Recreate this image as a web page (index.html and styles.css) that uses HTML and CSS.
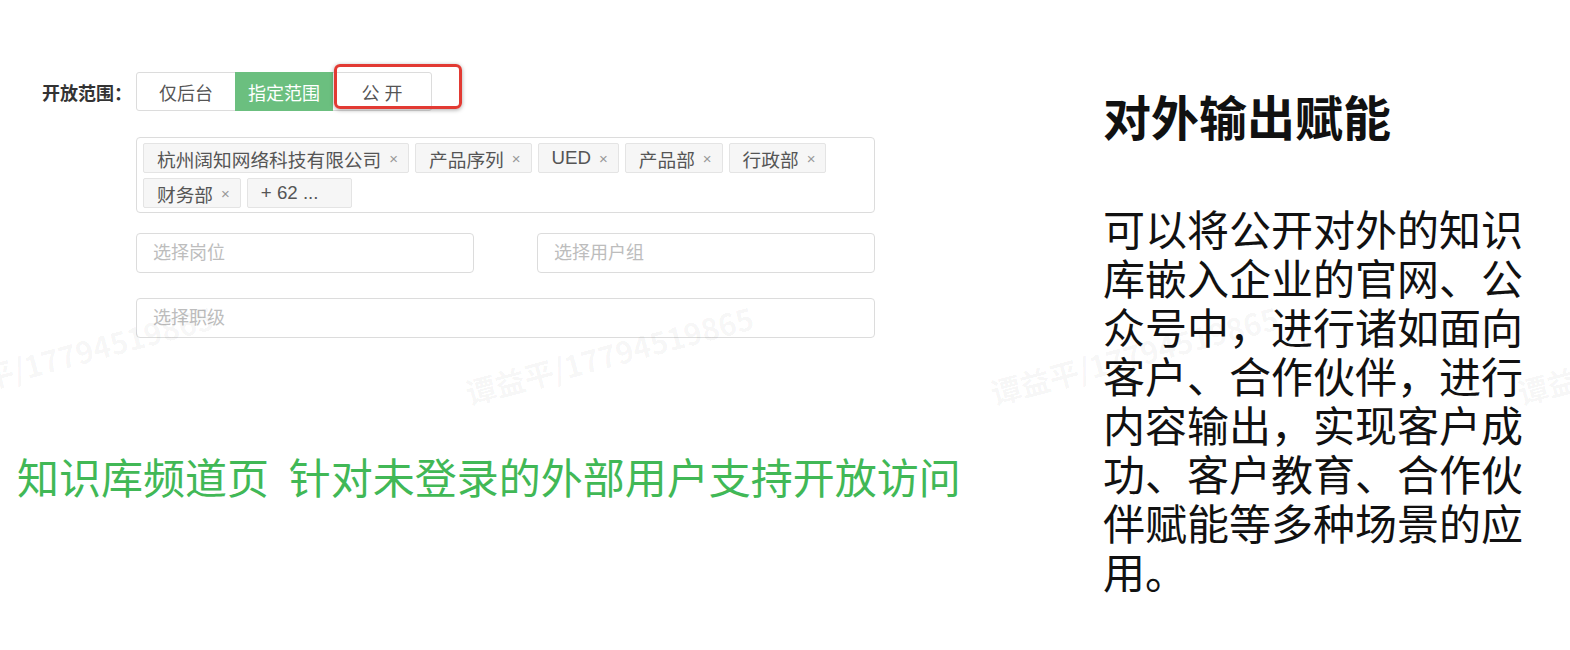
FILE: index.html
```html
<!DOCTYPE html>
<html lang="zh-CN">
<head>
    <meta charset="UTF-8">
    <title>开放范围</title>
    <link rel="stylesheet" href="styles.css">
</head>
<body>
    <div class="page">
        <div class="left">
            <div class="form">
                <div class="form-row">
                    <div class="form-label">开放范围：</div>
                    <div class="seg">
                        <span class="seg-item">仅后台</span>
                        <span class="seg-item active">指定范围</span>
                        <span class="seg-item">公 开</span>
                        <span class="mark"></span>
                    </div>
                </div>
                <div class="form-row indent tags-row">
                    <div class="tag-box">
                        <span class="tag">杭州阔知网络科技有限公司<i class="tag-x">×</i></span>
                        <span class="tag">产品序列<i class="tag-x">×</i></span>
                        <span class="tag">UED<i class="tag-x">×</i></span>
                        <span class="tag">产品部<i class="tag-x">×</i></span>
                        <span class="tag">行政部<i class="tag-x">×</i></span>
                        <span class="tag">财务部<i class="tag-x">×</i></span>
                        <span class="tag more">+ 62 ...</span>
                    </div>
                </div>
                <div class="form-row indent inputs-row">
                    <input class="field half" type="text" placeholder="选择岗位">
                    <input class="field half" type="text" placeholder="选择用户组">
                </div>
                <div class="form-row indent level-row">
                    <input class="field full" type="text" placeholder="选择职级">
                </div>
            </div>
            <p class="note">知识库频道页 针对未登录的外部用户支持开放访问</p>
        </div>
        <div class="right">
            <h1 class="title">对外输出赋能</h1>
            <p class="desc">可以将公开对外的知识库嵌入企业的官网、公众号中，进行诸如面向客户、合作伙伴，进行内容输出，实现客户成功、客户教育、合作伙伴赋能等多种场景的应用。</p>
        </div>

        <!-- watermark layer -->
        <div class="watermarks">
            <span class="wm" style="left:-80px;top:332px">谭益平/17794519865</span>
            <span class="wm" style="left:460px;top:332px">谭益平/17794519865</span>
            <span class="wm" style="left:985px;top:332px">谭益平/17794519865</span>
            <span class="wm" style="left:1512px;top:332px">谭益平/17794519865</span>
        </div>
    </div>
</body>
</html>
```

FILE: styles.css
```css
html, body {margin: 0; padding: 0; background: #ffffff;}
body {font: 18px "Liberation Sans", "Noto Sans CJK SC", sans-serif; color: #333;}

.page {
    position: relative;
    display: flex;
    width: 1570px;
    height: 650px;
    overflow: hidden;
}

/* left side: the form screenshot */
.left {
    box-sizing: border-box;
    width: 1103px;
    padding-left: 17px;
    padding-top: 72px;
}
.form {margin-left: 25px;}
.form-row {display: flex; align-items: center;}
.form-row.indent {padding-left: 94px;}
.form-label {
    width: 94px;
    font-weight: bold;
    color: #333;
    font-size: 18px;
}

.seg {
    position: relative;
    display: flex;
    width: 296px;
    height: 39px;
    box-sizing: border-box;
    border: 1px solid #dcdcdc;
    border-radius: 3px;
}
.seg-item {
    flex: 1 1 0;
    display: flex;
    align-items: center;
    justify-content: center;
    color: #555;
}
.seg-item + .seg-item {border-left: 1px solid #dcdcdc;}
.seg-item.active {
    background: #6bbf7f;
    color: #ffffff;
    margin: -1px 0;
    border-left: 0;
}
.seg-item.active + .seg-item {border-left: 0;}
.mark {
    position: absolute;
    left: 197px;
    top: -9px;
    width: 128px;
    height: 45px;
    box-sizing: border-box;
    border: 3px solid #e23a33;
    border-radius: 6px;
    box-shadow: 0 1px 4px rgba(0, 0, 0, .35);
}

.tags-row {margin-top: 26px;}
.tag-box {
    display: flex;
    flex-wrap: wrap;
    gap: 5px 6px;
    box-sizing: border-box;
    width: 739px;
    height: 76px;
    padding: 5px 6px 4px;
    border: 1px solid #dcdcdc;
    border-radius: 4px;
}
.tag {
    display: flex;
    align-items: center;
    height: 30px;
    box-sizing: border-box;
    padding: 0 10px 0 13px;
    background: #f6f6f6;
    border: 1px solid #e4e4e4;
    border-radius: 2px;
    color: #555;
    font-size: 18.7px;
}
.tag-x {
    font-style: normal;
    font-size: 15px;
    color: #999;
    margin-left: 8px;
}
.tag.more {padding-right: 32px;}

.inputs-row {margin-top: 20px; gap: 63px;}
.level-row {margin-top: 25px;}
.field {
    box-sizing: border-box;
    height: 40px;
    margin: 0;
    padding: 0 16px;
    border: 1px solid #dcdcdc;
    border-radius: 4px;
    font: 18px "Liberation Sans", "Noto Sans CJK SC", sans-serif;
    color: #333;
    background: #fff;
}
.field::placeholder {color: #bdbdbd;}
.field.half {width: 338px;}
.field.full {width: 739px;}

.note {
    margin: 117px 0 0;
    font-size: 42px;
    line-height: 50px;
    color: #41b856;
    word-spacing: 8px;
    white-space: nowrap;
}

/* right side: slide text */
.right {
    width: 440px;
    padding-top: 87px;
    font-family: "Noto Sans CJK SC", sans-serif;
    color: #111;
}
.title {
    margin: 0;
    font-size: 48px;
    line-height: 56px;
    font-weight: bold;
}
.desc {
    width: 424px;
    margin: 60px 0 0;
    font-size: 42px;
    line-height: 49px;
}

.watermarks {
    position: absolute;
    left: 0;
    top: 0;
    right: 0;
    bottom: 0;
    pointer-events: none;
}
.wm {
    position: absolute;
    width: 300px;
    height: 36px;
    line-height: 36px;
    font: bold 30px "Noto Sans CJK SC", sans-serif;
    color: rgba(0, 0, 0, .045);
    white-space: nowrap;
    transform: rotate(-15deg);
    transform-origin: center;
}
```
